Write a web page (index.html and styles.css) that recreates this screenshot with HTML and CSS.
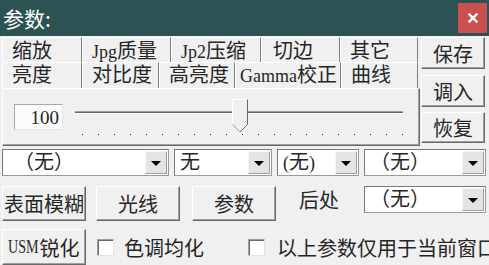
FILE: index.html
```html
<!DOCTYPE html>
<html lang="zh">
<head>
<meta charset="utf-8">
<title>参数</title>
<link rel="stylesheet" href="styles.css">
</head>
<body>
<div class="window">
  <div class="titlebar">
    <span class="title">参数:</span>
    <div class="close">
      <svg width="10" height="10" viewBox="0 0 10 10"><path d="M1.5 1.5 L8.5 8.5 M8.5 1.5 L1.5 8.5" stroke="#fff" stroke-width="2.4" stroke-linecap="square"/></svg>
    </div>
  </div>

  <div class="main">
    <div class="tabs">
      <div class="tabrow back">
        <div class="tab w80">缩放</div>
        <div class="tab w89"><span class="lat">Jpg</span>质量</div>
        <div class="tab w90"><span class="lat">Jp2</span>压缩</div>
        <div class="tab w79 pl12">切边</div>
        <div class="tab w78">其它</div>
      </div>
      <div class="tabrow front">
        <div class="tab w80 selected">亮度</div>
        <div class="tab w77">对比度</div>
        <div class="tab w76">高亮度</div>
        <div class="tab w106 pl4"><span class="lat">Gamma</span>校正</div>
        <div class="tab w77">曲线</div>
      </div>
      <div class="panel">
        <div class="edit"><span class="lat">100</span></div>
        <svg class="slider" width="348" height="42" viewBox="0 0 348 42">
          <rect x="9" y="15" width="328" height="1" fill="#a0a0a0"/>
          <rect x="9" y="16" width="328" height="1" fill="#696969"/>
          <rect x="9" y="17" width="328" height="1" fill="#ffffff"/>
          <g fill="#333">
            <rect x="16" y="38" width="1" height="1"/><rect x="32" y="38" width="1" height="1"/>
            <rect x="48" y="38" width="1" height="1"/><rect x="64" y="38" width="1" height="1"/>
            <rect x="80" y="38" width="1" height="1"/><rect x="96" y="38" width="1" height="1"/>
            <rect x="112" y="38" width="1" height="1"/><rect x="128" y="38" width="1" height="1"/>
            <rect x="144" y="38" width="1" height="1"/><rect x="160" y="38" width="1" height="1"/>
            <rect x="176" y="38" width="1" height="1"/><rect x="192" y="38" width="1" height="1"/>
            <rect x="208" y="38" width="1" height="1"/><rect x="224" y="38" width="1" height="1"/>
            <rect x="240" y="38" width="1" height="1"/><rect x="256" y="38" width="1" height="1"/>
            <rect x="272" y="38" width="1" height="1"/><rect x="288" y="38" width="1" height="1"/>
            <rect x="304" y="38" width="1" height="1"/><rect x="320" y="38" width="1" height="1"/>
            <rect x="336" y="38" width="1" height="1"/>
          </g>
          <path d="M166.5 3.5 H181.5 V28.5 L174 36 L166.5 28.5 Z" fill="#f0f0f0"/>
          <path d="M166.5 28.5 V3.5 H181.5" fill="none" stroke="#ffffff" stroke-width="1"/>
          <path d="M181.5 3.5 V28.5 L174 36" fill="none" stroke="#696969" stroke-width="1"/>
          <path d="M166.5 28.5 L174 36" fill="none" stroke="#a0a0a0" stroke-width="1"/>
        </svg>
      </div>
    </div>
    <div class="side">
      <div class="btn h32">保存</div>
      <div class="btn h32 mt6">调入</div>
      <div class="btn h31 mt5">恢复</div>
    </div>
  </div>

  <div class="combos">
    <div class="combo w167 wide"><span class="ctext">（无）</span><span class="arrow"><i></i></span></div>
    <div class="combo w98 ml5"><span class="ctext">无</span><span class="arrow"><i></i></span></div>
    <div class="combo w82 ml5"><span class="ctext"><span class="lat">(</span>无<span class="lat">)</span></span><span class="arrow"><i></i></span></div>
    <div class="combo w122 ml5"><span class="ctext">（无）</span><span class="arrow"><i></i></span></div>
  </div>

  <div class="btnrow">
    <div class="btn w84 h35">表面模糊</div>
    <div class="btn w84 h35 ml10">光线</div>
    <div class="btn w84 h35 ml12">参数</div>
    <span class="label">后处</span>
    <div class="combo w122 push"><span class="ctext">（无）</span><span class="arrow"><i></i></span></div>
  </div>

  <div class="checkrow">
    <div class="btn w84 h36"><span class="usm">USM</span>锐化</div>
    <span class="check first"></span>
    <span class="ctlabel">色调均化</span>
    <span class="check second"></span>
    <span class="ctlabel">以上参数仅用于当前窗口</span>
  </div>
</div>
</body>
</html>
```

FILE: styles.css
```css
* { box-sizing: border-box; }

html, body {
  margin: 0;
  padding: 0;
  background: #f0f0f0;
}

.window {
  width: 489px;
  height: 265px;
  overflow: hidden;
  background: #f0f0f0;
  font-family: "Liberation Serif", "Noto Sans CJK SC", serif;
  font-size: 20px;
  color: #262626;
  white-space: nowrap;
}

.lat { font-size: 18px; }
.usm {
  display: inline-block;
  font-size: 19px;
  transform: scaleX(0.74);
  transform-origin: left center;
  margin-right: -10px;
}

/* title bar */
.titlebar {
  height: 36px;
  background: #2c5253;
  display: flex;
  align-items: center;
  justify-content: space-between;
  padding: 0 2px 0 3px;
}
.title {
  color: #fff;
  font-family: "Noto Sans CJK SC", sans-serif;
  font-size: 21px;
  line-height: 36px;
}
.close {
  width: 29px;
  height: 30px;
  background: #c9504f;
  display: flex;
  align-items: center;
  justify-content: center;
}

/* top area */
.main {
  display: flex;
  padding: 1px 0 0 2px;
}
.tabs { width: 418px; }
.tabrow { display: flex; }
.tabrow.back { height: 25px; }
.tabrow.front { height: 26px; }

.tab {
  border-top: 1px solid #fff;
  border-left: 1px solid #fff;
  border-right: 1px solid #808080;
  padding-left: 9px;
  background: #f0f0f0;
}
.tabrow.back .tab { line-height: 22px; padding-top: 2px; }
.tabrow.front .tab { line-height: 25px; }
.tab.pl12 { padding-left: 11px; }
.tab.pl4 { padding-left: 4px; }

.w76 { width: 76px; }
.w77 { width: 77px; }
.w78 { width: 78px; }
.w79 { width: 79px; }
.w80 { width: 80px; }
.w82 { width: 82px; }
.w84 { width: 84px; }
.w89 { width: 89px; }
.w90 { width: 90px; }
.w98 { width: 98px; }
.w106 { width: 106px; }
.w122 { width: 122px; }
.w167 { width: 167px; }

.panel {
  width: 418px;
  height: 58px;
  border-top: 1px solid #fff;
  border-left: 1px solid #fff;
  border-right: 1px solid #696969;
  border-bottom: 1px solid #696969;
  box-shadow: inset -1px -1px 0 #a0a0a0;
  display: flex;
  align-items: flex-start;
}
.edit {
  width: 49px;
  height: 26px;
  margin: 15px 0 0 11px;
  background: #fbfbfb;
  border: 1px solid #a8a8a8;
  border-right-color: #e8e8e8;
  border-bottom-color: #e8e8e8;
  text-align: right;
  padding-right: 3px;
  line-height: 24px;
}
.edit .lat { font-size: 19px; }
.slider { display: block; margin: 7px 0 0 3px; }

/* side buttons */
.side {
  width: 64px;
  margin-left: 1px;
  display: flex;
  flex-direction: column;
}

.btn {
  display: flex;
  align-items: center;
  justify-content: center;
  background: #f0f0f0;
  border: 1px solid;
  border-color: #fff #696969 #696969 #fff;
  box-shadow: inset -1px -1px 0 #a0a0a0;
  flex: none;
}
.h31 { height: 31px; }
.h32 { height: 32px; }
.h35 { height: 35px; }
.h36 { height: 36px; }
.mt5 { margin-top: 5px; }
.mt6 { margin-top: 6px; }
.ml5 { margin-left: 5px; }
.ml10 { margin-left: 10px; }
.ml12 { margin-left: 12px; }

/* combos */
.combos {
  display: flex;
  margin-top: 3px;
  padding-left: 2px;
}
.combo {
  height: 27px;
  display: flex;
  align-items: stretch;
  background: #fff;
  border: 1px solid;
  border-color: #7a7a7a #9a9a9a #9a9a9a #7a7a7a;
  padding: 1px 1px 1px 2px;
  flex: none;
}
.ctext {
  flex: 1;
  line-height: 23px;
  padding-left: 3px;
  overflow: hidden;
}
.combo.wide .ctext { padding-left: 9px; }
.arrow {
  flex: none;
  width: 22px;
  background: #e4e4e4;
  border: 1px solid;
  border-color: #f6f6f6 #a0a0a0 #a0a0a0 #f6f6f6;
  display: flex;
  align-items: center;
  justify-content: center;
}
.arrow i {
  display: block;
  width: 0;
  height: 0;
  border-left: 5px solid transparent;
  border-right: 5px solid transparent;
  border-top: 5px solid #000;
  margin-top: 1px;
}

/* button row */
.btnrow {
  display: flex;
  align-items: flex-start;
  margin-top: 10px;
  padding-left: 2px;
  padding-right: 3px;
}
.label {
  margin-left: 23px;
  line-height: 30px;
}
.push { margin-left: auto; }

/* check row */
.checkrow {
  display: flex;
  align-items: center;
  margin-top: 8px;
  padding-left: 2px;
  height: 36px;
}
.check {
  width: 17px;
  height: 17px;
  background: #fff;
  border: 1px solid;
  border-color: #a0a0a0 #e3e3e3 #e3e3e3 #a0a0a0;
  box-shadow: inset 1px 1px 0 #696969;
  flex: none;
}
.check.first { margin-left: 11px; }
.check.second { margin-left: 44px; }
.ctlabel { margin-left: 10px; }
.check.second + .ctlabel { margin-left: 12px; }
```
